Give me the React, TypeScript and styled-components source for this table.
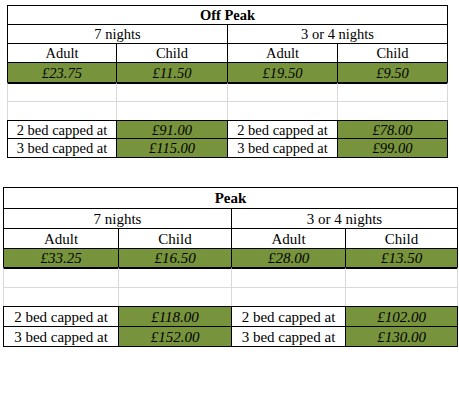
import React from "react";
import styled, { createGlobalStyle } from "styled-components";

const Global = createGlobalStyle`
  html, body { margin: 0; padding: 0; background: #ffffff; }
`;

const Page = styled.div`
  display: flex;
  flex-direction: column;
  align-items: flex-start;
  width: 459px;
  height: 405px;
  overflow: hidden;
`;

const Sheet = styled.div<{ $cols: string; $rows: string; $font: number; $mt: number; $ml: number }>`
  display: grid;
  grid-template-columns: ${(p) => p.$cols};
  grid-template-rows: ${(p) => p.$rows};
  margin: ${(p) => p.$mt}px 0 0 ${(p) => p.$ml}px;
  font-family: "Liberation Serif", "Times New Roman", serif;
  font-size: ${(p) => p.$font}px;
  color: #000;
`;

type Kind = "title" | "head" | "label" | "price" | "blank";

const Cell = styled.div<{
  $kind: Kind;
  $span: number;
  $t: string;
  $l: string;
  $r: string;
  $b: string;
}>`
  box-sizing: border-box;
  grid-column: span ${(p) => p.$span};
  display: flex;
  align-items: center;
  justify-content: center;
  padding-top: 1px;
  white-space: nowrap;
  line-height: 1;
  border-top: ${(p) => p.$t};
  border-left: ${(p) => p.$l};
  border-right: ${(p) => p.$r};
  border-bottom: ${(p) => p.$b};
  background: ${(p) => (p.$kind === "price" ? "#77933c" : "#ffffff")};
  font-weight: ${(p) => (p.$kind === "title" ? 700 : 400)};
  font-style: ${(p) => (p.$kind === "price" ? "italic" : "normal")};
  color: #000;
`;

type Spec = { text?: string; span?: number; kind: Kind };

const BLACK = "1px solid #000";
const THICK = "2px solid #000";
const GRAY = "1px solid #d9d9d9";

type TableData = {
  title: string;
  rates: [string, string, string, string];
  caps: [string, string, string, string];
};

const buildRows = (d: TableData): Spec[][] => [
  [{ text: d.title, span: 4, kind: "title" }],
  [
    { text: "7 nights", span: 2, kind: "head" },
    { text: "3 or 4 nights", span: 2, kind: "head" },
  ],
  [
    { text: "Adult", kind: "label" },
    { text: "Child", kind: "label" },
    { text: "Adult", kind: "label" },
    { text: "Child", kind: "label" },
  ],
  d.rates.map((t) => ({ text: t, kind: "price" as Kind })),
  [{ kind: "blank" }, { kind: "blank" }, { kind: "blank" }, { kind: "blank" }],
  [{ kind: "blank" }, { kind: "blank" }, { kind: "blank" }, { kind: "blank" }],
  [
    { text: "2 bed capped at", kind: "label" },
    { text: d.caps[0], kind: "price" },
    { text: "2 bed capped at", kind: "label" },
    { text: d.caps[1], kind: "price" },
  ],
  [
    { text: "3 bed capped at", kind: "label" },
    { text: d.caps[2], kind: "price" },
    { text: "3 bed capped at", kind: "label" },
    { text: d.caps[3], kind: "price" },
  ],
];

const topBorder = (rowIndex: number) => {
  if (rowIndex === 4) return THICK;
  if (rowIndex === 5) return GRAY;
  return BLACK;
};

const RateSheet: React.FC<{
  data: TableData;
  cols: string;
  rows: string;
  font: number;
  mt: number;
  ml: number;
}> = ({ data, cols, rows, font, mt, ml }) => {
  const grid = buildRows(data);
  return (
    <Sheet $cols={cols} $rows={rows} $font={font} $mt={mt} $ml={ml}>
      {grid.map((row, r) => {
        let col = 0;
        return row.map((cell, c) => {
          const span = cell.span ?? 1;
          const start = col;
          col += span;
          const side = cell.kind === "blank" ? GRAY : BLACK;
          return (
            <Cell
              key={`${r}-${c}`}
              $kind={cell.kind}
              $span={span}
              $t={topBorder(r)}
              $l={side}
              $r={start + span === 4 ? side : "none"}
              $b={r === grid.length - 1 ? BLACK : "none"}
            >
              {cell.text}
            </Cell>
          );
        });
      })}
    </Sheet>
  );
};

const offPeak: TableData = {
  title: "Off Peak",
  rates: ["£23.75", "£11.50", "£19.50", "£9.50"],
  caps: ["£91.00", "£78.00", "£115.00", "£99.00"],
};

const peak: TableData = {
  title: "Peak",
  rates: ["£33.25", "£16.50", "£28.00", "£13.50"],
  caps: ["£118.00", "£102.00", "£152.00", "£130.00"],
};

export default function App() {
  return (
    <>
      <Global />
      <Page>
        <RateSheet
          data={offPeak}
          cols="109px 111px 110px 111px"
          rows="19px 19px 19px 20px 19px 19px 18px 20px"
          font={14.5}
          mt={5}
          ml={7}
        />
        <RateSheet
          data={peak}
          cols="115px 113px 114px 113px"
          rows="21px 20px 20px 19px 20px 19px 20px 21px"
          font={15}
          mt={29}
          ml={3}
        />
      </Page>
    </>
  );
}
